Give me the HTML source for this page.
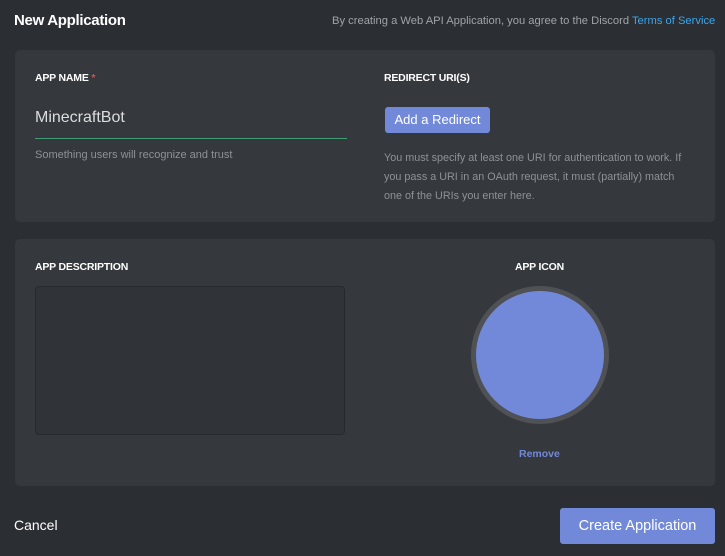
<!DOCTYPE html>
<html><head><meta charset="utf-8"><style>
*{margin:0;padding:0;box-sizing:border-box}
body{width:725px;height:556px;background:#2b2e33;font-family:"Liberation Sans",sans-serif;position:relative;overflow:hidden;color:#fff}
.a{position:absolute}
.panel{position:absolute;left:15px;width:700px;background:#35383d;border-radius:5px}
.lbl{font-size:10.5px;font-weight:bold;color:#fff;letter-spacing:-0.2px}
.mut{color:#8e9297;font-size:11px}
</style></head><body>
<div class="a" style="left:14px;top:12px;font-size:15px;font-weight:bold;letter-spacing:-0.3px">New Application</div>
<div class="a mut" style="left:332px;top:15px;font-size:11.2px;color:#a0a3a8">By creating a Web API Application, you agree to the Discord <span style="color:#3ea5e8">Terms of Service</span></div>

<div class="panel" style="top:50px;height:172px"></div>
<div class="a lbl" style="left:35px;top:72px">APP NAME <span style="color:#f04747">*</span></div>
<div class="a" style="left:35px;top:109px;font-size:16px;color:#dcddde">MinecraftBot</div>
<div class="a" style="left:35px;top:138px;width:312px;height:1px;background:#43b581;opacity:.8"></div>
<div class="a mut" style="left:35px;top:149px">Something users will recognize and trust</div>

<div class="a lbl" style="left:384px;top:72px">REDIRECT URI(S)</div>
<div class="a" style="left:385px;top:107px;width:105px;height:26px;background:#7289da;border-radius:3px;font-size:13px;line-height:26px;text-align:center;color:#fff">Add a Redirect</div>
<div class="a mut" style="left:384px;top:149px;width:300px;line-height:19px;font-size:10.8px">You must specify at least one URI for authentication to work. If<br>you pass a URI in an OAuth request, it must (partially) match<br>one of the URIs you enter here.</div>

<div class="panel" style="top:239px;height:247px"></div>
<div class="a lbl" style="left:35px;top:261px">APP DESCRIPTION</div>
<div class="a" style="left:35px;top:286px;width:310px;height:149px;background:#303338;border:1px solid #27292d;border-radius:4px"></div>
<div class="a lbl" style="left:515px;top:261px">APP ICON</div>
<div class="a" style="left:471px;top:286px;width:138px;height:138px;border-radius:50%;background:#7289da;border:5px solid #4f5155"></div>
<div class="a" style="left:519px;top:448px;font-size:10.5px;font-weight:bold;color:#7289da">Remove</div>

<div class="a" style="left:14px;top:517px;font-size:14px;color:#fff">Cancel</div>
<div class="a" style="left:560px;top:508px;width:155px;height:36px;background:#7289da;border-radius:3px;font-size:14.5px;line-height:36px;text-align:center;color:#fff">Create Application</div>
</body></html>
